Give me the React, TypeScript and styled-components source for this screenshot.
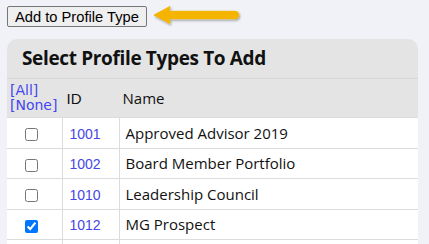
import * as React from 'react';
import styled, { createGlobalStyle } from 'styled-components';

const GlobalStyle = createGlobalStyle`
  body {
    margin: 0;
    background-color: #f0f2f7;
    font-family: 'Open Sans', 'Noto Sans', sans-serif;
  }
`;

const Page = styled.div`
  padding: 6px 11px 0 7px;
`;

const Toolbar = styled.div`
  display: flex;
  align-items: center;
  gap: 6px;
  height: 21px;
`;

const AddButton = styled.button`
  font-family: 'Liberation Sans', Arial, sans-serif;
  font-size: 14.7px;
  height: 21px;
  padding: 0 7px;
  color: #000;
  background-color: #efefef;
  border: 1px solid #767676;
  border-radius: 2px;
`;

const Panel = styled.section`
  margin-top: 12px;
  background-color: #e4e4e4;
  border-radius: 10px 10px 0 0;
  overflow: hidden;
`;

const Title = styled.h2`
  margin: 0;
  padding: 0 15px;
  height: 39px;
  line-height: 39px;
  font-size: 19px;
  font-weight: 700;
  letter-spacing: -0.35px;
  color: #111;
  border-bottom: 1px solid #d6d6d6;
`;

const Table = styled.table`
  width: 100%;
  table-layout: fixed;
  border-collapse: collapse;
  th, td {
    border: 1px solid #dcdcdc;
    border-top: none;
  }
  th:first-child, td:first-child {
    border-left: none;
  }
  th:last-child, td:last-child {
    border-right: none;
  }
`;

const HeadCell = styled.th<{ $pad: number }>`
  height: 38px;
  padding: 0 0 0 ${(p) => p.$pad}px;
  text-align: left;
  font-weight: 400;
  font-size: 15px;
  color: #111;
  border-left-color: transparent !important;
  border-right-color: transparent !important;
`;

const PickLinks = styled.div`
  font-family: 'DejaVu Sans', Verdana, sans-serif;
  font-size: 14px;
  line-height: 15px;
  a {
    display: block;
    color: #4646f0;
    text-decoration: none;
  }
`;

const IdHead = styled.span`
  font-family: 'Liberation Sans', Arial, sans-serif;
`;

const Row = styled.tr`
  background-color: #fff;
  td {
    height: 29.5px;
    padding: 0 0 0 6px;
    font-size: 15px;
    color: #111;
    white-space: nowrap;
  }
`;

const CheckCell = styled.td`
  && {
    padding-left: 18px;
  }
  input {
    margin: 0;
    width: 13px;
    height: 13px;
    vertical-align: middle;
  }
`;

const IdLink = styled.a`
  font-family: 'Liberation Sans', Arial, sans-serif;
  font-size: 14px;
  color: #4646e6;
  text-decoration: none;
  padding-left: 1px;
`;

const Arrow = () => (
  <svg width="90" height="24" viewBox="0 0 90 24">
    <defs>
      <filter id="sh" x="-10%" y="-30%" width="130%" height="180%">
        <feDropShadow dx="1" dy="1.5" stdDeviation="1" floodColor="#000" floodOpacity="0.35" />
      </filter>
    </defs>
    <path
      d="M1 10 L17 1.5 L16 6.3 L82 6.3 A3.7 3.7 0 0 1 82 13.7 L16 13.7 L17 18.5 Z"
      fill="#f5b400"
      stroke="#f5b400"
      strokeWidth="1"
      strokeLinejoin="round"
      filter="url(#sh)"
    />
  </svg>
);

const types = [
  { id: 1001, name: 'Approved Advisor 2019', checked: false },
  { id: 1002, name: 'Board Member Portfolio', checked: false },
  { id: 1010, name: 'Leadership Council', checked: false },
  { id: 1012, name: 'MG Prospect', checked: true },
];

export default function App() {
  return (
    <Page>
      <GlobalStyle />
      <Toolbar>
        <AddButton>Add to Profile Type</AddButton>
        <Arrow />
      </Toolbar>
      <Panel>
        <Title>Select Profile Types To Add</Title>
        <Table>
          <colgroup>
            <col style={{ width: 55 }} />
            <col style={{ width: 57 }} />
            <col />
          </colgroup>
          <thead>
            <tr>
              <HeadCell $pad={3}>
                <PickLinks>
                  <a href="#">[All]</a>
                  <a href="#">[None]</a>
                </PickLinks>
              </HeadCell>
              <HeadCell $pad={4}>
                <IdHead>ID</IdHead>
              </HeadCell>
              <HeadCell $pad={3}>Name</HeadCell>
            </tr>
          </thead>
          <tbody>
            {types.map((t) => (
              <Row key={t.id}>
                <CheckCell>
                  <input type="checkbox" defaultChecked={t.checked} />
                </CheckCell>
                <td>
                  <IdLink href="#">{t.id}</IdLink>
                </td>
                <td>{t.name}</td>
              </Row>
            ))}
            <Row>
              <td />
              <td />
              <td />
            </Row>
          </tbody>
        </Table>
      </Panel>
    </Page>
  );
}
